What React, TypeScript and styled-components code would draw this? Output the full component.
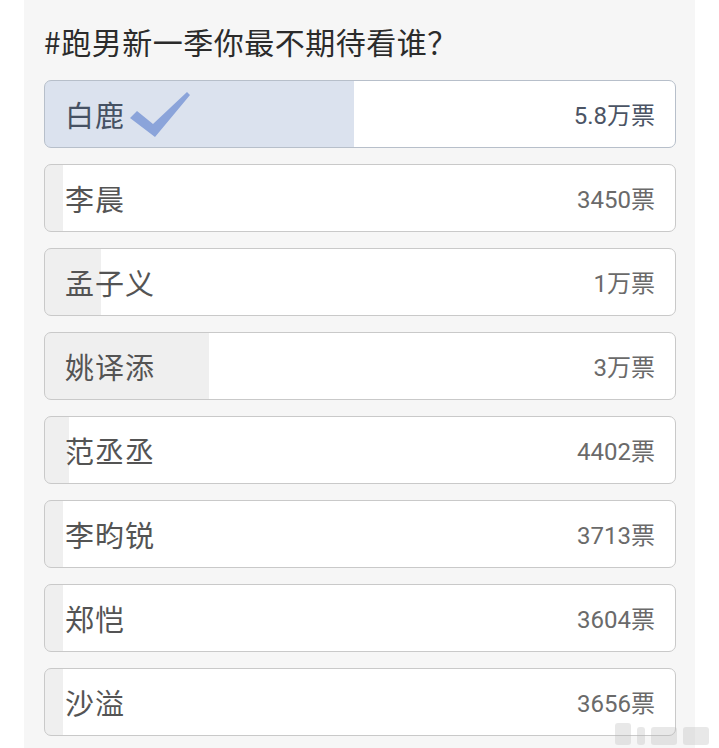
import React from "react";
import styled, { createGlobalStyle } from "styled-components";

const Global = createGlobalStyle`
  html, body { margin: 0; padding: 0; background: #ffffff; }
  body { font-family: "Noto Sans CJK SC", "Noto Sans", sans-serif; }
`;

const Page = styled.div`
  position: relative;
  width: 719px;
  height: 748px;
  overflow: hidden;
  background: #ffffff;
`;

const Panel = styled.div`
  margin-left: 24px;
  width: 671px;
  height: 748px;
  box-sizing: border-box;
  background: #f6f6f6;
  padding: 19px 19px 0 20px;
`;

const Title = styled.h1`
  margin: 0 0 17px 0;
  font-size: 30px;
  line-height: 44px;
  font-weight: 400;
  color: #2b2b2b;
  letter-spacing: 0.5px;
`;

const List = styled.div`
  display: flex;
  flex-direction: column;
  gap: 16px;
`;

const Card = styled.div<{ $pct: number; $selected: boolean }>`
  display: flex;
  align-items: center;
  justify-content: space-between;
  height: 68px;
  box-sizing: border-box;
  padding: 0 20px 0 20px;
  border: 1px solid ${(p) => (p.$selected ? "#b7bfca" : "#c9c9c9")};
  border-radius: 7px;
  background: linear-gradient(
    to right,
    ${(p) => (p.$selected ? "#dbe2ee" : "#efefef")} 0,
    ${(p) => (p.$selected ? "#dbe2ee" : "#efefef")} ${(p) => p.$pct}%,
    #ffffff ${(p) => p.$pct}%,
    #ffffff 100%
  );
`;

const NameWrap = styled.div`
  display: flex;
  align-items: center;
`;

const Name = styled.span<{ $selected: boolean }>`
  font-size: 29px;
  line-height: 1;
  color: ${(p) => (p.$selected ? "#455163" : "#545454")};
  letter-spacing: 1px;
`;

const Check = styled.svg`
  margin-left: 4px;
  margin-top: 2px;
`;

const Votes = styled.span<{ $selected: boolean }>`
  font-family: Roboto, "Noto Sans CJK SC", sans-serif;
  font-size: 24px;
  line-height: 1;
  padding-top: 4px;
  color: ${(p) => (p.$selected ? "#4b5464" : "#6a6a6a")};
`;

const Watermark = styled.div`
  position: absolute;
  right: 10px;
  bottom: 3px;
  display: flex;
  align-items: flex-end;
  gap: 6px;
  opacity: 0.3;
`;

const WmBar = styled.div<{ $w: number; $h: number }>`
  width: ${(p) => p.$w}px;
  height: ${(p) => p.$h}px;
  background: #b5b5b5;
  border-radius: 3px;
`;

type Item = { name: string; votes: string; pct: number; selected?: boolean };

const items: Item[] = [
  { name: "白鹿", votes: "5.8万票", pct: 49, selected: true },
  { name: "李晨", votes: "3450票", pct: 2.8 },
  { name: "孟子义", votes: "1万票", pct: 8.9 },
  { name: "姚译添", votes: "3万票", pct: 26 },
  { name: "范丞丞", votes: "4402票", pct: 3.8 },
  { name: "李昀锐", votes: "3713票", pct: 2.8 },
  { name: "郑恺", votes: "3604票", pct: 2.8 },
  { name: "沙溢", votes: "3656票", pct: 2.8 },
];

export default function App() {
  return (
    <Page>
      <Global />
      <Panel>
        <Title>#跑男新一季你最不期待看谁？</Title>
        <List>
          {items.map((it) => (
            <Card key={it.name} $pct={it.pct} $selected={!!it.selected}>
              <NameWrap>
                <Name $selected={!!it.selected}>{it.name}</Name>
                {it.selected && (
                  <Check width="62" height="46" viewBox="0 0 62 46">
                    <path d="M1,26 L8,19 L24,32 L58,0 L61,3 L26,45 Z" fill="#8ba4da" />
                  </Check>
                )}
              </NameWrap>
              <Votes $selected={!!it.selected}>{it.votes}</Votes>
            </Card>
          ))}
        </List>
      </Panel>
      <Watermark>
        <WmBar $w={16} $h={22} />
        <WmBar $w={8} $h={18} />
        <WmBar $w={26} $h={18} />
        <WmBar $w={26} $h={18} />
      </Watermark>
    </Page>
  );
}
